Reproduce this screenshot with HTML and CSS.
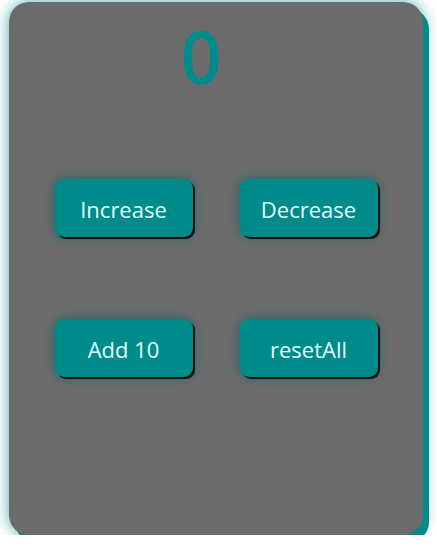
FILE: index.html
```html
<!DOCTYPE html>
<html>
<head>
<meta charset="utf-8">
<link rel="stylesheet" href="styles.css">
</head>
<body>
<div class="card">
  <div class="count">0</div>
  <div class="buttons">
    <button class="btn">Increase</button>
    <button class="btn">Decrease</button>
    <button class="btn">Add 10</button>
    <button class="btn">resetAll</button>
  </div>
</div>
</body>
</html>
```
FILE: styles.css
```css
html, body {
  margin: 0;
  padding: 0;
  background: #ffffff;
}
body {
  padding: 2px 0 0 9px;
  font-family: "Open Sans", "Noto Sans", sans-serif;
}
.card {
  width: 414px;
  height: 533px;
  box-sizing: border-box;
  background: #6b6b6b;
  border-radius: 20px;
  box-shadow: 6px 7px 0 #008b8b, 0 0 16px rgba(0, 139, 139, 0.7);
  display: flex;
  flex-direction: column;
  align-items: center;
}
.count {
  color: #008b8b;
  font-size: 72px;
  font-weight: 600;
  line-height: 1;
  margin-top: 18px;
  margin-left: -30px;
}
.buttons {
  display: grid;
  grid-template-columns: 138px 138px;
  column-gap: 47px;
  row-gap: 82px;
  margin-top: 87px;
}
.btn {
  width: 138px;
  height: 58px;
  border: none;
  border-radius: 9px;
  background: #008b8b;
  color: #e0ffff;
  font-family: "Open Sans", "Noto Sans", sans-serif;
  font-size: 22px;
  box-shadow: 2px 2px 0 #111, 0 0 12px rgba(0, 100, 100, 0.7);
  padding: 2px 0 0;
}
```
